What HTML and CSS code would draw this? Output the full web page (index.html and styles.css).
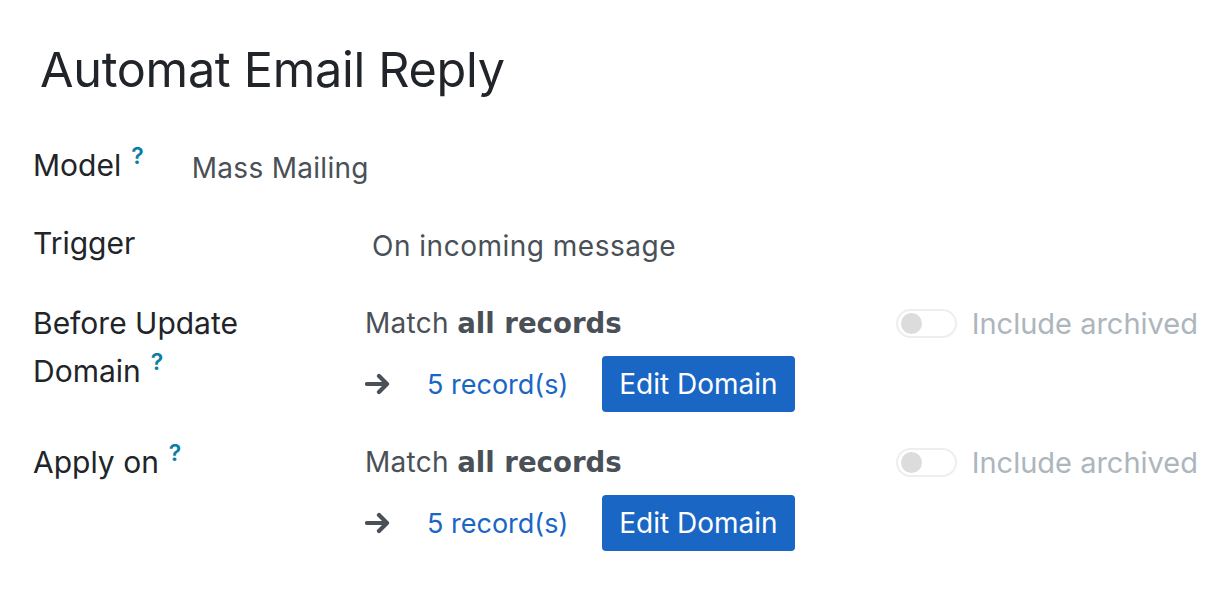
FILE: index.html
```html
<!DOCTYPE html>
<html>
<head>
<meta charset="utf-8">
<link rel="stylesheet" href="styles.css">
</head>
<body>
<div class="sheet">
  <h1 class="title">Automat Email Reply</h1>
  <div class="row row-model">
    <div class="label">Model<span class="help">?</span></div>
    <div class="value model-value">Mass Mailing</div>
  </div>
  <div class="row row-trigger">
    <div class="label">Trigger</div>
    <div class="value trigger-value">On incoming message</div>
  </div>
  <div class="row domain-row">
    <div class="label"><span>Before Update</span> <span class="nowrap">Domain<span class="help">?</span></span></div>
    <div class="domain">
      <div class="domain-top">
        <div class="match">Match <b>all records</b></div>
        <div class="archived"><span class="toggle"><span class="knob"></span></span>Include archived</div>
      </div>
      <div class="domain-bottom">
        <svg class="arrow" viewBox="0 0 28 24" width="28" height="24"><path d="M2 12 H22 M14 4 L22 12 L14 20" fill="none" stroke="#495057" stroke-width="4.2" stroke-linecap="round" stroke-linejoin="round"/></svg>
        <a class="records">5 record(s)</a>
        <button class="btn">Edit Domain</button>
      </div>
    </div>
  </div>
  <div class="row domain-row">
    <div class="label">Apply on<span class="help">?</span></div>
    <div class="domain">
      <div class="domain-top">
        <div class="match">Match <b>all records</b></div>
        <div class="archived"><span class="toggle"><span class="knob"></span></span>Include archived</div>
      </div>
      <div class="domain-bottom">
        <svg class="arrow" viewBox="0 0 28 24" width="28" height="24"><path d="M2 12 H22 M14 4 L22 12 L14 20" fill="none" stroke="#495057" stroke-width="4.2" stroke-linecap="round" stroke-linejoin="round"/></svg>
        <a class="records">5 record(s)</a>
        <button class="btn">Edit Domain</button>
      </div>
    </div>
  </div>
</div>
</body>
</html>
```
FILE: styles.css
```css
html, body {
  margin: 0;
  padding: 0;
  background: #fff;
}
body {
  font-family: Inter, "Noto Sans", sans-serif;
  color: #212529;
}
.sheet {
  padding: 38px 30px 0 33px;
}
.title {
  margin: 0 0 0 7px;
  font-size: 48.6px;
  font-weight: 400;
  line-height: 64px;
  letter-spacing: -0.3px;
  color: #212529;
}
.row {
  display: flex;
  align-items: flex-start;
}
.label {
  width: 292px;
  padding-right: 40px;
  flex: none;
  font-size: 30px;
  line-height: 48px;
}
.nowrap {
  white-space: nowrap;
}
.help {
  display: inline-block;
  color: #0a7ea4;
  font-size: 23px;
  font-weight: 600;
  line-height: 1;
  margin-left: 10px;
  margin-top: 4px;
  vertical-align: top;
}
.row-model {
  margin-top: 39px;
}
.row-model .label {
  width: auto;
  padding-right: 0;
}
.value {
  font-size: 28px;
  line-height: 48px;
  letter-spacing: 0.3px;
  color: #495057;
  margin-top: 3px;
}
.model-value {
  margin-left: 48px;
}
.row-trigger {
  margin-top: 27px;
}
.trigger-value {
  margin-left: 7px;
  letter-spacing: 0.5px;
}
.domain-row {
  margin-top: 29px;
}
.domain-row + .domain-row {
  margin-top: 26px;
}
.domain {
  flex: 1;
}
.domain-top {
  display: flex;
  justify-content: space-between;
  align-items: center;
  height: 48px;
}
.match {
  font-size: 28px;
  letter-spacing: 0.3px;
  color: #495057;
}
.match b {
  font-family: "DejaVu Sans", Inter, sans-serif;
  font-size: 27.6px;
  font-weight: 700;
  letter-spacing: 0;
}
.archived {
  display: flex;
  align-items: center;
  font-size: 29px;
  color: #adb5bd;
}
.toggle {
  width: 54px;
  height: 25px;
  border: 2px solid #eceef0;
  border-radius: 15px;
  margin-right: 15px;
  display: flex;
  align-items: center;
  padding-left: 3px;
}
.knob {
  width: 21px;
  height: 21px;
  border-radius: 50%;
  background: #dcdcdc;
}
.domain-bottom {
  display: flex;
  align-items: center;
  margin-top: 9px;
}
.arrow {
  margin-right: 34px;
}
.records {
  font-size: 27px;
  color: #1a66c4;
  margin-right: 34px;
}
.btn {
  font-family: Inter, "Noto Sans", sans-serif;
  font-size: 28px;
  color: #fff;
  background: #1a66c4;
  border: none;
  border-radius: 4px;
  height: 56px;
  padding: 0 17px;
}
```
